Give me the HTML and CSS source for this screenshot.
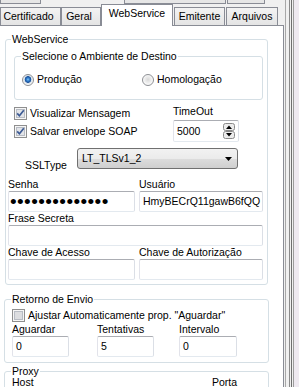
FILE: index.html
```html
<!DOCTYPE html>
<html lang="pt">
<head>
    <meta charset="UTF-8">
    <title>Configurações</title>
    <link rel="stylesheet" href="styles.css">
</head>
<body>
    <div class="window">
        <div class="main">
            <!-- linha de abas de cima (cortada) -->
            <div class="upper">
                <span class="up up1"></span>
                <span class="up up2"></span>
                <span class="up up3"></span>
            </div>

            <div class="tabs">
                <div class="tab tab-cert">Certificado</div>
                <div class="tab tab-geral">Geral</div>
                <div class="tab tab-ws active">WebService</div>
                <div class="tab tab-emit">Emitente</div>
                <div class="tab tab-arq">Arquivos</div>
            </div>

            <div class="panel">
                <fieldset class="group group-ws">
                    <legend>WebService</legend>

                    <fieldset class="group group-amb">
                        <legend>Selecione o Ambiente de Destino</legend>
                        <div class="radios">
                            <label class="radio radio-prod"><span class="dot on"></span>Produção</label>
                            <label class="radio"><span class="dot"></span>Homologação</label>
                        </div>
                    </fieldset>

                    <div class="opts">
                        <div class="checks">
                            <label class="check">
                                <svg class="box" width="13" height="13" viewBox="0 0 13 13"><rect x="0.5" y="0.5" width="12" height="12" fill="#f6f6f6" stroke="#8f8f8f"/><rect x="2.5" y="2.5" width="8" height="8" fill="#e2e4e8" stroke="#b8bcc4"/><path d="M3.2 6.4 L5.4 8.8 L9.8 3.2" fill="none" stroke="#3c5a94" stroke-width="1.7"/></svg>
                                Visualizar Mensagem
                            </label>
                            <label class="check">
                                <svg class="box" width="13" height="13" viewBox="0 0 13 13"><rect x="0.5" y="0.5" width="12" height="12" fill="#f6f6f6" stroke="#8f8f8f"/><rect x="2.5" y="2.5" width="8" height="8" fill="#e2e4e8" stroke="#b8bcc4"/><path d="M3.2 6.4 L5.4 8.8 L9.8 3.2" fill="none" stroke="#3c5a94" stroke-width="1.7"/></svg>
                                Salvar envelope SOAP
                            </label>
                        </div>
                        <div class="timeout">
                            <div class="lbl">TimeOut</div>
                            <div class="edit spin">
                                <span>5000</span>
                                <span class="spin-btns">
                                    <svg width="12" height="16" viewBox="0 0 12 16"><rect x="0.5" y="0.5" width="11" height="7" rx="2" fill="#ececec" stroke="#8a8a8a"/><rect x="0.5" y="8.5" width="11" height="7" rx="2" fill="#ececec" stroke="#8a8a8a"/><path d="M3 6 L6 2.5 L9 6 Z" fill="#000"/><path d="M3 10 L6 13.5 L9 10 Z" fill="#000"/></svg>
                                </span>
                            </div>
                        </div>
                    </div>

                    <div class="ssl">
                        <span class="ssl-lbl">SSLType</span>
                        <div class="combo">
                            <span>LT_TLSv1_2</span>
                            <svg width="7" height="4" viewBox="0 0 7 4"><path d="M0 0 H7 L3.5 4 Z" fill="#000"/></svg>
                        </div>
                    </div>

                    <div class="fields">
                        <div class="field">
                            <div class="lbl">Senha</div>
                            <div class="edit pass">••••••••••••••</div>
                        </div>
                        <div class="field">
                            <div class="lbl">Usuário</div>
                            <div class="edit">HmyBECrQ11gawB6fQQ</div>
                        </div>
                        <div class="field wide">
                            <div class="lbl">Frase Secreta</div>
                            <div class="edit"></div>
                        </div>
                        <div class="field">
                            <div class="lbl">Chave de Acesso</div>
                            <div class="edit"></div>
                        </div>
                        <div class="field">
                            <div class="lbl">Chave de Autorização</div>
                            <div class="edit"></div>
                        </div>
                    </div>
                </fieldset>

                <fieldset class="group group-ret">
                    <legend>Retorno de Envio</legend>
                    <label class="check check-ajuste">
                        <svg class="box" width="13" height="13" viewBox="0 0 13 13"><rect x="0.5" y="0.5" width="12" height="12" fill="#f6f6f6" stroke="#8f8f8f"/><rect x="2.5" y="2.5" width="8" height="8" fill="#dcdde0" stroke="#b8bcc4"/></svg>
                        Ajustar Automaticamente prop. "Aguardar"
                    </label>
                    <div class="ret-fields">
                        <div class="field">
                            <div class="lbl">Aguardar</div>
                            <div class="edit small">0</div>
                        </div>
                        <div class="field">
                            <div class="lbl">Tentativas</div>
                            <div class="edit small">5</div>
                        </div>
                        <div class="field">
                            <div class="lbl">Intervalo</div>
                            <div class="edit small last">0</div>
                        </div>
                    </div>
                </fieldset>

                <fieldset class="group group-proxy">
                    <legend>Proxy</legend>
                    <div class="proxy-row">
                        <span class="host">Host</span>
                        <span>Porta</span>
                    </div>
                </fieldset>
            </div>
        </div>
        <div class="side"></div>
    </div>
</body>
</html>
```

FILE: styles.css
```css
body {
    margin: 0;
    background-color: #f0f0f0;
    font-family: "Liberation Sans", Arial, sans-serif;
    font-size: 10.5px;
    line-height: 13px;
    color: #000;
}
.window {
    display: flex;
    width: 299px;
    height: 387px;
    overflow: hidden;
}
.main {
    width: 284px;
    flex: none;
    display: flex;
    flex-direction: column;
}

/* abas de cima, quase escondidas */
.upper {
    height: 6px;
    display: flex;
    align-items: flex-start;
}
.up {
    height: 3px;
    border: 1px solid #898c95;
    border-top: none;
    background: #e6e6e6;
}
.up1 { width: 39px; }
.up2 { width: 100px; margin-left: 83px; }
.up3 { width: 36px; margin-left: 1px; }

/* abas */
.tabs {
    display: flex;
    align-items: flex-end;
    height: 21px;
}
.tab {
    box-sizing: border-box;
    height: 18px;
    border: 1px solid #898c95;
    border-bottom: none;
    background: linear-gradient(#f3f3f3, #e4e4e4);
    text-align: center;
    line-height: 16px;
    white-space: nowrap;
}
.tab-cert { width: 61px; padding-right: 4px; }
.tab-geral { width: 40px; padding-right: 4px; }
.tab-ws { width: 72px; }
.tab-emit { width: 51px; margin-left: 1px; }
.tab-arq { width: 52px; margin-left: 1px; }
.tab.active {
    position: relative;
    z-index: 1;
    height: 22px;
    margin-bottom: -1px;
    background: #fff;
    line-height: 17px;
}

.panel {
    flex: 1;
    background: #fff;
    border-top: 1px solid #898c95;
    border-right: 1px solid #898c95;
}

/* grupos */
.group {
    box-sizing: border-box;
    min-width: 0;
    margin: 0;
    padding: 0;
    border: 1px solid #d5dfe5;
    border-radius: 3px;
}
.group legend {
    padding: 0 1px;
    line-height: 13px;
}
.group-ws {
    margin: 7px 0 0 5px;
    width: 263px;
    padding: 0 4px 4px 2px;
}
.group-ws > legend { margin-left: 3px; }

.group-amb {
    margin: 4px 0 0 6px;
    width: 249px;
    padding: 10px 0 13px 7px;
}
.group-amb > legend { margin-left: -1px; }
.radios {
    display: flex;
    height: 13px;
}
.radio {
    display: flex;
    align-items: center;
    gap: 3px;
}
.radio-prod { width: 120px; }
.dot {
    box-sizing: border-box;
    width: 12px;
    height: 12px;
    border-radius: 50%;
    border: 1px solid #8d8f94;
    background: radial-gradient(circle at 50% 45%, #d8d8d8 0, #ececec 3px, #fafafa 5px);
}
.dot.on {
    background: radial-gradient(circle at 50% 45%, #8cc8f2 0, #2f7fd0 1.5px, #1d4f96 3px, #cfe2f3 3.6px, #e8e8e8 4.5px, #fafafa 5px);
}

/* opções */
.opts {
    display: flex;
}
.checks {
    width: 159px;
    margin: 7px 0 0 6px;
    display: flex;
    flex-direction: column;
    gap: 5px;
}
.check {
    display: flex;
    align-items: center;
    gap: 3px;
    height: 13px;
    white-space: nowrap;
}
.box { flex: none; }
.timeout {
    margin-top: 5px;
}
.timeout .lbl {
    line-height: 13px;
    margin-bottom: 2px;
}

.edit {
    box-sizing: border-box;
    height: 21px;
    border: 1px solid;
    border-color: #abadb3 #dbdfe6 #e3e9ef #e2e3ea;
    border-radius: 2px;
    padding-left: 3px;
    line-height: 19px;
    white-space: nowrap;
    overflow: hidden;
    background: #fff;
}
.spin {
    width: 66px;
    height: 22px;
    display: flex;
    align-items: center;
    justify-content: space-between;
    padding-right: 3px;
}
.spin-btns {
    display: flex;
}

.ssl {
    display: flex;
    margin-top: 6px;
}
.ssl-lbl {
    width: 52px;
    margin-left: 17px;
    padding-top: 11px;
}
.combo {
    box-sizing: border-box;
    width: 161px;
    height: 21px;
    border: 1px solid #707070;
    border-radius: 3px;
    background: linear-gradient(#f2f2f2 0%, #ebebeb 50%, #dddddd 50%, #cfcfcf 100%);
    display: flex;
    align-items: center;
    justify-content: space-between;
    padding: 0 5px 0 4px;
}

/* campos */
.fields {
    display: grid;
    grid-template-columns: 127px 124px;
    column-gap: 4px;
    margin-top: 6px;
}
.field .lbl {
    line-height: 12px;
    margin-bottom: 1px;
    white-space: nowrap;
}
.wide {
    grid-column: 1 / 3;
}
.pass {
    font-size: 19px;
    letter-spacing: 0.4px;
    line-height: 20px;
    padding-left: 1px;
}

.group-ret {
    margin: 8px 0 0 4px;
    width: 265px;
    padding: 0 0 5px 7px;
}
.group-ret > legend { margin-left: -1px; }
.check-ajuste {
    margin-top: 3px;
}
.ret-fields {
    display: grid;
    grid-template-columns: 85px 82px 58px;
    margin-top: 1px;
}
.small { width: 57px; }
.small.last { width: 58px; }

.group-proxy {
    margin: 3px 0 0 4px;
    width: 265px;
    height: 60px;
    padding: 0 0 0 7px;
}
.group-proxy > legend {
    margin-left: -1px;
    line-height: 11px;
}
.proxy-row {
    display: flex;
    line-height: 11px;
}
.host {
    width: 200px;
}

/* borda da janela à direita */
.side {
    flex: 1;
    background: linear-gradient(to right, #f0f0f0 0 1px, #a8a8a8 1px 2px, #f0f0f0 2px 5px, #8a8a8a 5px 6px, #f0f0f0 6px 7px, #6f6f6f 7px 8px, #f0f0f0 8px 9px, #9c9c9c 9px 10px, #eee9f0 10px);
}
```
